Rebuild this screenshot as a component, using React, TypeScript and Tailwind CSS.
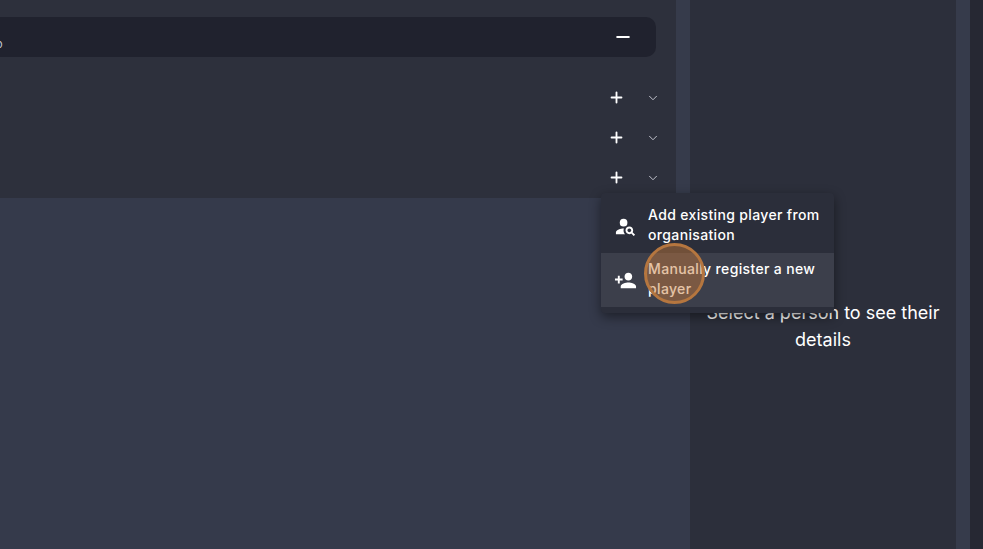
import { MdPersonAdd, MdPersonSearch } from 'react-icons/md'
import { ChevronDown, Minus, Plus } from 'lucide-react'

function ActionRow() {
  return (
    <div className="flex h-10 items-center justify-end">
      <Plus size={17} strokeWidth={2.6} className="mr-[21px] text-white" />
      <ChevronDown size={14} strokeWidth={1.5} className="mt-[2px] mr-[16px] text-[#d3d6df]" />
    </div>
  )
}

function MenuItem({ icon, lines, active }: { icon: React.ReactNode; lines: string[]; active?: boolean }) {
  return (
    <div className={`flex h-[54px] items-center ${active ? 'bg-[#3c3f4b]' : ''}`}>
      <div className="flex w-[47px] justify-center pl-[1px] text-white">{icon}</div>
      <div className="mt-[-2px] text-[14px] leading-[20px] font-medium tracking-[0.35px] text-white">
        {lines.map((l) => (
          <div key={l}>{l}</div>
        ))}
      </div>
    </div>
  )
}

export default function App() {
  return (
    <div className="relative flex h-[549px] w-[983px] overflow-hidden bg-[#2b2e3a] font-['Inter',sans-serif] text-white">
      <div className="flex w-[690px] flex-col bg-[#353a4b]">
        <div className="flex h-[198px] bg-[#2d303c]">
          <div className="w-[676px] pt-[17px] pr-[20px]">
            <div className="flex h-10 items-center justify-between rounded-r-[10px] bg-[#20222e] pr-[23px]">
              <span className="mt-[15px] ml-[-4px] text-[11px] text-[#c9ccd6]">o</span>
              <Minus size={20} strokeWidth={2.4} className="text-white" />
            </div>
            <div className="mr-[-20px] pt-[20px]">
              <ActionRow />
              <ActionRow />
              <ActionRow />
            </div>
          </div>
          <div className="h-[193px] w-[14px] bg-[#363b4b]" />
        </div>
      </div>

      <div className="flex w-[266px] flex-col items-center justify-start bg-[#2c2f3b] pt-[299px]">
        <p className="w-[240px] text-center text-[18px] leading-[27px] text-white">
          Select a person to see their details
        </p>
      </div>
      <div className="w-[14px] bg-[#363b4b]" />
      <div className="w-[13px] bg-[#262833]" />

      {/* Dropdown opened from the last row */}
      <div className="absolute top-[193px] left-[601px] w-[233px] rounded-[4px] bg-[#2b2e3a] pt-[6px] pb-[6px] shadow-[0_4px_12px_rgba(0,0,0,0.45)]">
        <MenuItem icon={<MdPersonSearch size={23} />} lines={['Add existing player from', 'organisation']} />
        <MenuItem active icon={<MdPersonAdd size={23} />} lines={['Manually register a new', 'player']} />
      </div>

      {/* Click highlight */}
      <div className="absolute top-[243px] left-[644px] h-[61px] w-[61px] rounded-full border-[3px] border-[#b5763f] bg-[#c8793a]/45" />
    </div>
  )
}
